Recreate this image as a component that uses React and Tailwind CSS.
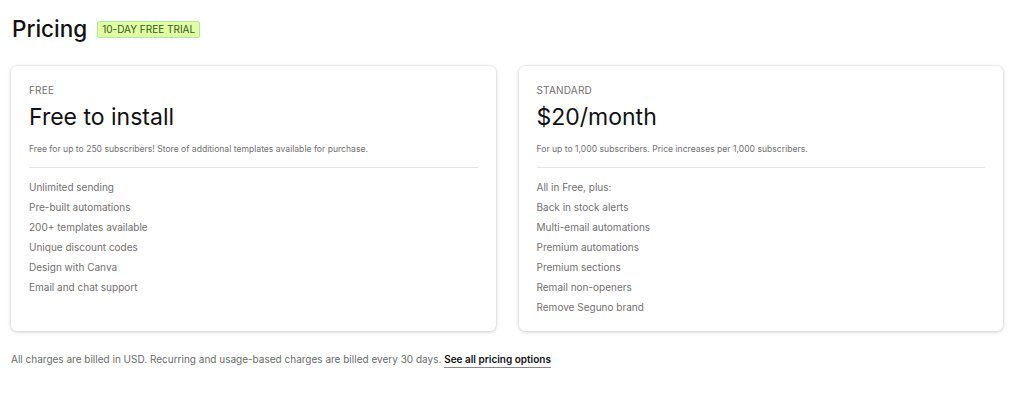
const plans = [
  {
    tier: 'FREE',
    price: 'Free to install',
    note: 'Free for up to 250 subscribers! Store of additional templates available for purchase.',
    features: [
      'Unlimited sending',
      'Pre-built automations',
      '200+ templates available',
      'Unique discount codes',
      'Design with Canva',
      'Email and chat support',
    ],
  },
  {
    tier: 'STANDARD',
    price: '$20/month',
    note: 'For up to 1,000 subscribers. Price increases per 1,000 subscribers.',
    features: [
      'All in Free, plus:',
      'Back in stock alerts',
      'Multi-email automations',
      'Premium automations',
      'Premium sections',
      'Remail non-openers',
      'Remove Seguno brand',
    ],
  },
];

function PlanCard({ plan }) {
  return (
    <div className="flex-1 rounded-md bg-white px-[18px] pt-[17px] pb-[17px] shadow-[0_1px_4px_rgba(0,0,0,0.18),0_0_0_1px_rgba(0,0,0,0.03)]">
      <div className="text-[10px] leading-[14px] tracking-[0.2px] text-[#707070]">{plan.tier}</div>
      <div className="mt-[6px] text-[23px] leading-[28px] text-[#111]">{plan.price}</div>
      <p className="mt-[12px] text-[8.6px] leading-[12px] text-[#707070]">{plan.note}</p>
      <div className="mt-[12px] h-px bg-[#e6e6e6]" />
      <ul className="mt-[12px] flex flex-col gap-[6px]">
        {plan.features.map((f) => (
          <li key={f} className="text-[10px] leading-[14px] text-[#727070]">
            {f}
          </li>
        ))}
      </ul>
    </div>
  );
}

export default function App() {
  return (
    <div className="min-h-[397px] bg-white pl-[11px] pr-[21px] pt-[14px] font-['Inter',sans-serif]">
      {/* Header */}
      <div className="flex items-center gap-[10px] pl-px">
        <h1 className="text-[22.5px] leading-[30px] font-medium text-[#111]">Pricing</h1>
        <span className="mt-[1px] rounded-[2px] border border-[#a6ef9c] bg-[#e3fda2] px-[4px] text-[10px] leading-[15px] text-[#2f5a24]">
          10-DAY FREE TRIAL
        </span>
      </div>

      {/* Plans */}
      <div className="mt-[22px] flex gap-[23px]">
        {plans.map((p) => (
          <PlanCard key={p.tier} plan={p} />
        ))}
      </div>

      <p className="mt-[21px] text-[10px] leading-[14px] text-[#6b6b6b]">
        All charges are billed in USD. Recurring and usage-based charges are billed every 30 days.{' '}
        <a href="#" className="border-b border-[#8a8a8a] pb-[2px] font-semibold text-[#111]">
          See all pricing options
        </a>
      </p>
    </div>
  );
}
